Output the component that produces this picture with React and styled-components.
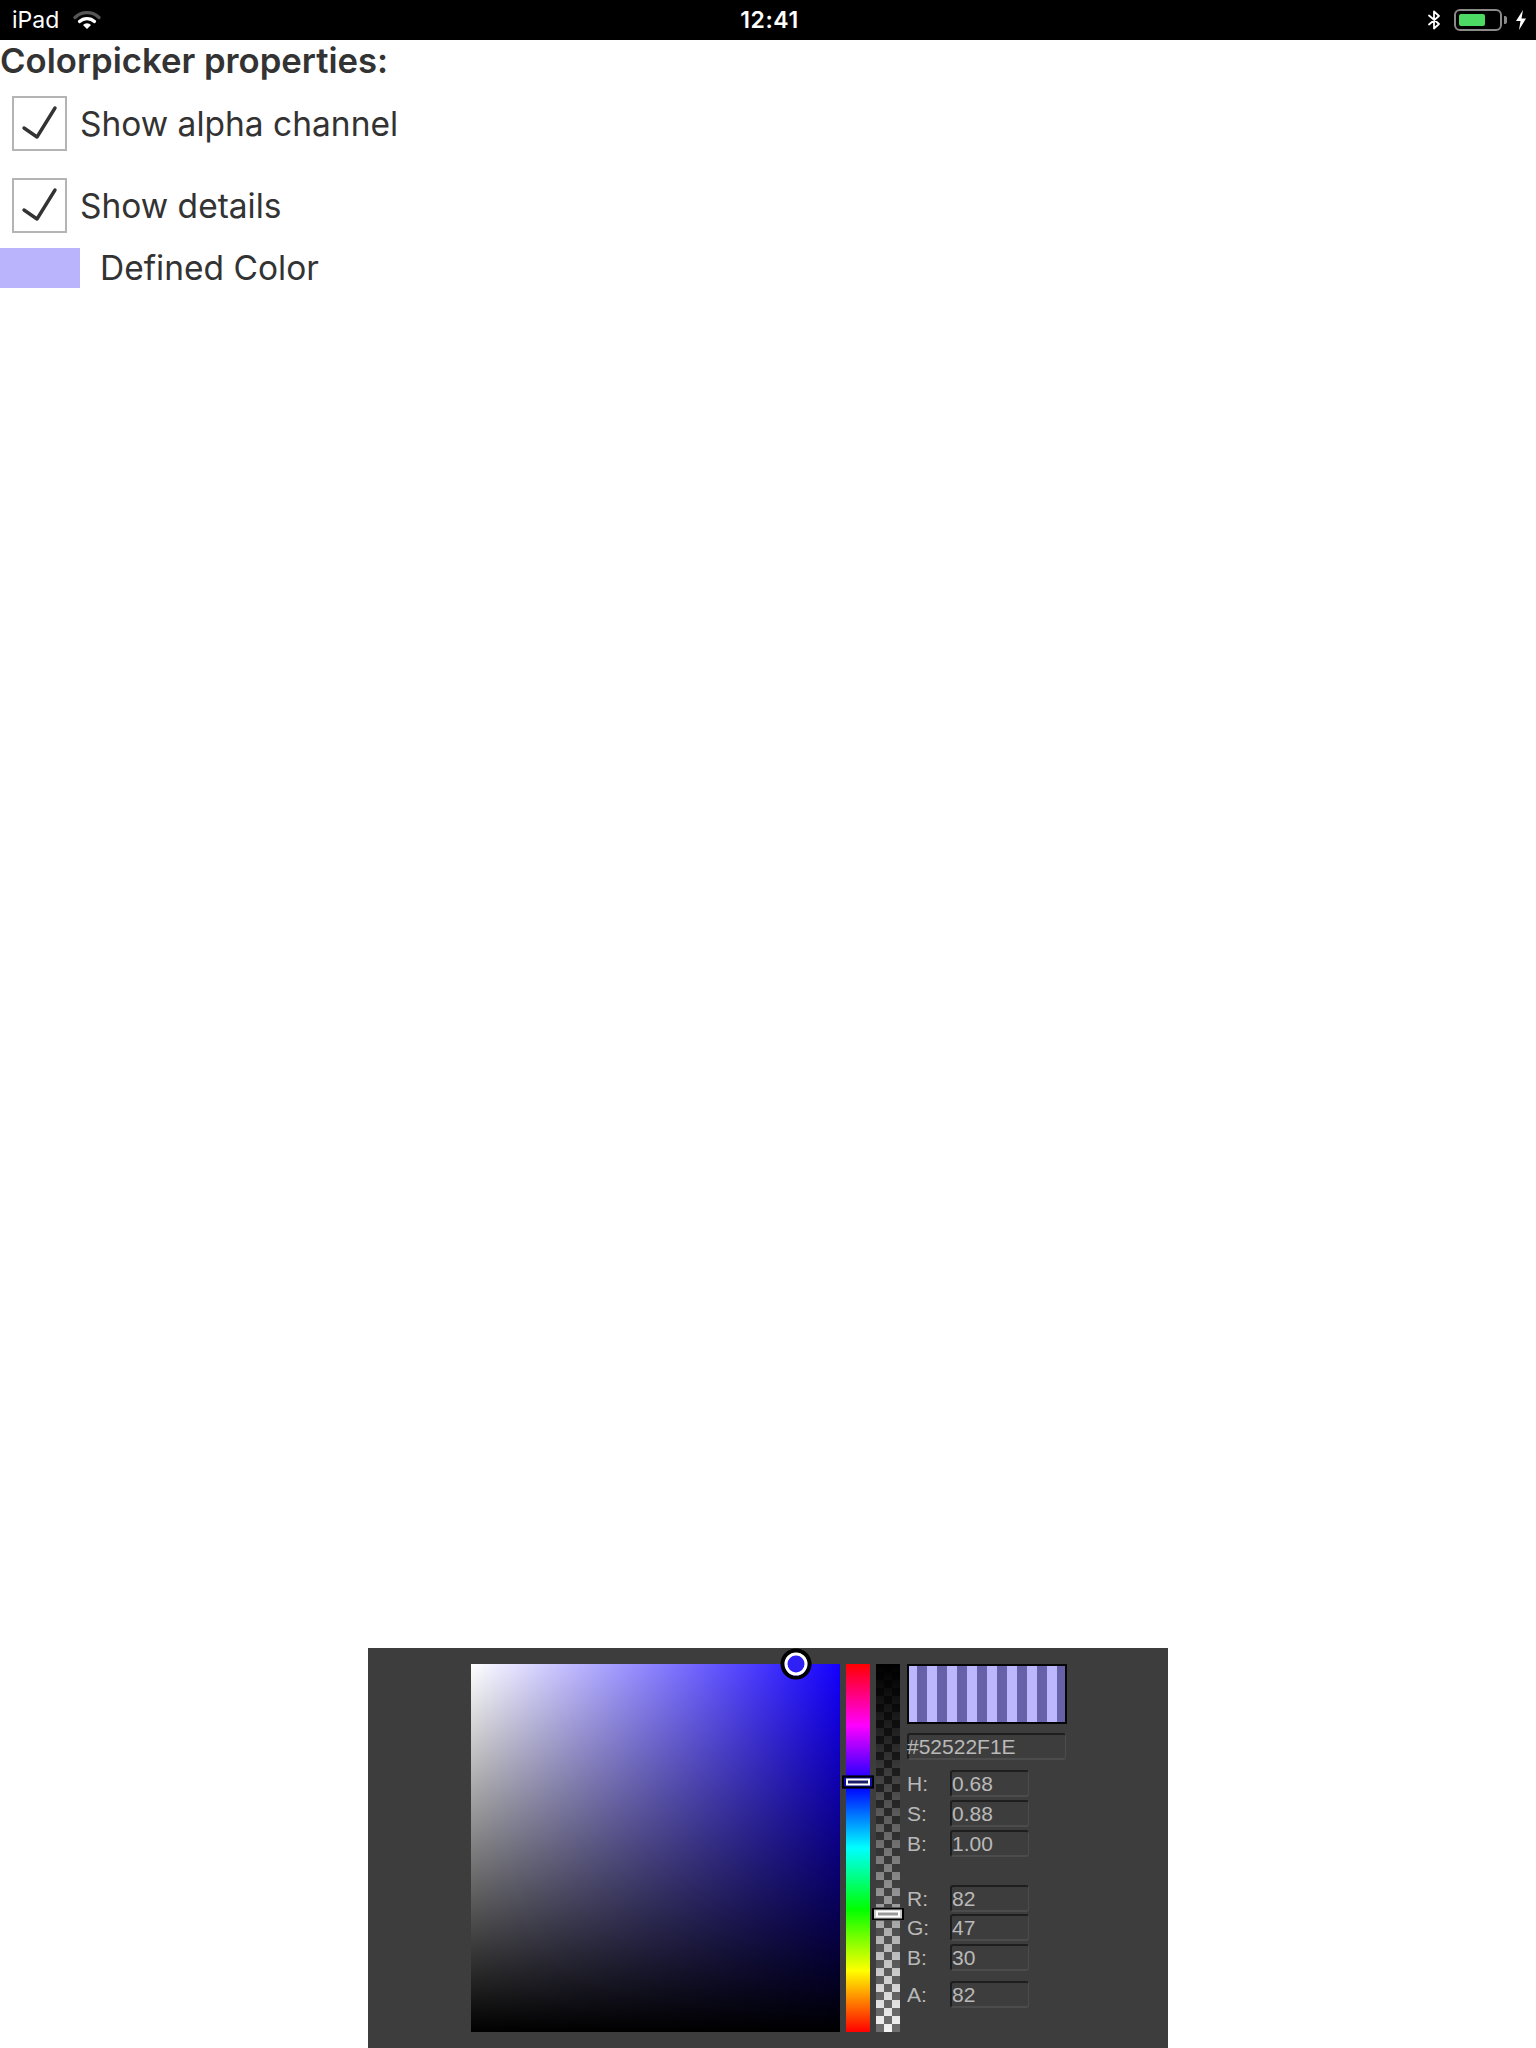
import React from 'react';
import styled, { createGlobalStyle } from 'styled-components';

const GlobalStyle = createGlobalStyle`
  html, body {
    margin: 0;
    padding: 0;
    background: #fff;
  }
  body {
    font-family: Inter, "Liberation Sans", sans-serif;
    overflow: hidden;
  }
`;

const Page = styled.div`
  height: 100vh;
  display: flex;
  flex-direction: column;
`;

const StatusBar = styled.div`
  height: 40px;
  flex: none;
  background: #000;
  color: #fff;
  display: grid;
  grid-template-columns: 1fr auto 1fr;
  align-items: center;
  padding: 0 9px 0 12px;
  font-size: 23px;
`;

const StatusLeft = styled.div`
  display: flex;
  align-items: center;
  gap: 14px;
`;

const Clock = styled.div`
  font-weight: 600;
  letter-spacing: 0.6px;
`;

const StatusRight = styled.div`
  display: flex;
  justify-content: flex-end;
  align-items: center;
  gap: 12px;
`;

const Battery = styled.div`
  display: flex;
  align-items: center;
  gap: 2px;
`;

const BatteryBody = styled.div`
  width: 48px;
  height: 22px;
  box-sizing: border-box;
  border: 2px solid #8a8a8a;
  border-radius: 6px;
  padding: 3px;
  display: flex;
`;

const BatteryLevel = styled.div`
  width: 26px;
  background: #4cd964;
  border-radius: 2px;
`;

const BatteryNub = styled.div`
  width: 3px;
  height: 8px;
  background: #8a8a8a;
  border-radius: 0 2px 2px 0;
  margin-right: 6px;
`;

const Properties = styled.section`
  display: flex;
  flex-direction: column;
  color: #333;
`;

const Heading = styled.h1`
  margin: 0;
  height: 40px;
  line-height: 40px;
  font-size: 34.7px;
  font-weight: 600;
`;

const CheckRow = styled.label`
  display: flex;
  align-items: center;
  gap: 13px;
  height: 55px;
  margin: ${(p) => p.$top}px 0 0 12px;
  font-size: 33.5px;
`;

const CheckBox = styled.span`
  width: 55px;
  height: 55px;
  box-sizing: border-box;
  border: 2px solid #b4b4b4;
  display: flex;
`;

const ColorRow = styled.div`
  display: flex;
  align-items: center;
  gap: 20px;
  height: 40px;
  margin-top: 15px;
  font-size: 33.5px;
`;

const Swatch = styled.span`
  width: 80px;
  height: 40px;
  background: ${(p) => p.$color};
`;

const Panel = styled.div`
  margin: auto auto 0;
  width: 800px;
  height: 400px;
  flex: none;
  box-sizing: border-box;
  background: #3d3d3d;
  padding: 16px 0 0 2px;
  display: flex;
  justify-content: center;
  align-items: flex-start;
  gap: 6px;
`;

const SVSquare = styled.div`
  position: relative;
  width: 369px;
  height: 368px;
  background:
    linear-gradient(to top, #000, rgba(0, 0, 0, 0)),
    linear-gradient(to right, #fff, ${(p) => p.$hue});
`;

const SVKnob = styled.div`
  position: absolute;
  width: 31px;
  height: 31px;
  box-sizing: border-box;
  border-radius: 50%;
  border: 4px solid #000;
  transform: translate(-50%, -50%);
  display: flex;
  &::after {
    content: '';
    flex: 1;
    border-radius: 50%;
    border: 3px solid #fff;
    background: ${(p) => p.$color};
  }
`;

const Bar = styled.div`
  position: relative;
  width: 24px;
  height: 368px;
`;

const HueBar = styled(Bar)`
  background: linear-gradient(
    to bottom,
    #f00 0%,
    #f0f 16.67%,
    #00f 33.33%,
    #0ff 50%,
    #0f0 66.67%,
    #ff0 83.33%,
    #f00 100%
  );
`;

const AlphaBar = styled(Bar)`
  background:
    linear-gradient(to bottom, #000 0%, rgba(0, 0, 0, 0.85) 20%, rgba(0, 0, 0, 0) 100%),
    conic-gradient(#6e6e6e 25%, #f4f4f4 0 50%, #6e6e6e 0 75%, #f4f4f4 0) 0 0 / 16px 16px;
`;

const BarHandle = styled.div`
  position: absolute;
  left: -4px;
  width: 32px;
  height: 13px;
  box-sizing: border-box;
  border: 2px solid #000;
  background: ${(p) => p.$fill};
  transform: translateY(-50%);
  padding: 1px 2px;
  display: flex;
  &::after {
    content: '';
    flex: 1;
    border: 2px solid #fff;
    background: ${(p) => p.$inner};
  }
`;

const Details = styled.div`
  margin-left: 1px;
  width: 160px;
  display: flex;
  flex-direction: column;
  color: #b9b9b9;
  font-family: "Liberation Sans", Arial, sans-serif;
  font-size: 21px;
`;

const Preview = styled.div`
  height: 60px;
  box-sizing: border-box;
  border: 2px solid #050505;
  background: linear-gradient(to right, #bdb7fd 50%, #6761aa 50%);
  background-size: 20px 100%;
  background-position: -2px 0;
`;

const Field = styled.div`
  width: ${(p) => p.$width}px;
  height: 27px;
  box-sizing: border-box;
  border-top: 2px solid #1e1e1e;
  border-left: 2px solid #1e1e1e;
  border-right: 1px solid #4c4c4c;
  border-bottom: 2px solid #4c4c4c;
  border-radius: 3px;
  line-height: 24px;
  white-space: nowrap;
  overflow: visible;
`;

const HexField = styled(Field)`
  margin-top: 9px;
  text-indent: -2px;
`;

const ValueRow = styled.div`
  display: flex;
  align-items: center;
  margin-top: ${(p) => p.$top}px;
`;

const Label = styled.span`
  width: 43px;
  flex: none;
`;

const Wifi = () => (
  <svg width="28" height="20" viewBox="0 0 28 20">
    <path d="M2 7.5 A17 17 0 0 1 26 7.5" fill="none" stroke="#555" strokeWidth="3.2" strokeLinecap="round" />
    <path d="M6.5 11.5 A11 11 0 0 1 21.5 11.5" fill="none" stroke="#fff" strokeWidth="3.2" strokeLinecap="round" />
    <path d="M14 19 L10 15 A5.6 5.6 0 0 1 18 15 Z" fill="#fff" />
  </svg>
);

const Bluetooth = () => (
  <svg width="15" height="20" viewBox="0 0 15 20">
    <path d="M2 5.5 L12 14 L7 18.5 L7 1.5 L12 6 L2 14.5" fill="none" stroke="#fff" strokeWidth="1.8" strokeLinejoin="round" strokeLinecap="round" />
  </svg>
);

const Bolt = () => (
  <svg width="12" height="20" viewBox="0 0 12 20">
    <path d="M8 0 L1 11 L5.5 11 L4 20 L11 8.5 L6.5 8.5 Z" fill="#fff" />
  </svg>
);

const Check = () => (
  <svg width="51" height="51" viewBox="0 0 51 51">
    <path d="M10 30 L23 39 L41 10" fill="none" stroke="#333" strokeWidth="3.4" strokeLinecap="round" strokeLinejoin="round" />
  </svg>
);

const hsv = [
  ['H:', '0.68', 10],
  ['S:', '0.88', 3],
  ['B:', '1.00', 3],
];

const rgb = [
  ['R:', '82', 28],
  ['G:', '47', 2],
  ['B:', '30', 3],
  ['A:', '82', 10],
];

export default function App() {
  const hue = 'rgb(20, 0, 255)';
  return (
    <Page>
      <GlobalStyle />
      <StatusBar>
        <StatusLeft>
          <span>iPad</span>
          <Wifi />
        </StatusLeft>
        <Clock>12:41</Clock>
        <StatusRight>
          <Bluetooth />
          <Battery>
            <BatteryBody>
              <BatteryLevel />
            </BatteryBody>
            <BatteryNub />
            <Bolt />
          </Battery>
        </StatusRight>
      </StatusBar>

      <Properties>
        <Heading>Colorpicker properties:</Heading>
        <CheckRow $top={16}>
          <CheckBox>
            <Check />
          </CheckBox>
          Show alpha channel
        </CheckRow>
        <CheckRow $top={27}>
          <CheckBox>
            <Check />
          </CheckBox>
          Show details
        </CheckRow>
        <ColorRow>
          <Swatch $color="#bab4fc" />
          Defined Color
        </ColorRow>
      </Properties>

      <Panel>
        <SVSquare $hue={hue}>
          <SVKnob $color="#2f21f6" style={{ left: '88%', top: '0%' }} />
        </SVSquare>
        <HueBar>
          <BarHandle $fill="#0b0bb0" $inner="#1a1a6a" style={{ top: '32%' }} />
        </HueBar>
        <AlphaBar>
          <BarHandle $fill="#c9c9c9" $inner="#9a9a9a" style={{ top: '68%' }} />
        </AlphaBar>
        <Details>
          <Preview />
          <HexField $width={159}>#52522F1E</HexField>
          {hsv.map(([label, value, top]) => (
            <ValueRow key={label + value} $top={top}>
              <Label>{label}</Label>
              <Field $width={79}>{value}</Field>
            </ValueRow>
          ))}
          {rgb.map(([label, value, top]) => (
            <ValueRow key={label + value} $top={top}>
              <Label>{label}</Label>
              <Field $width={79}>{value}</Field>
            </ValueRow>
          ))}
        </Details>
      </Panel>
    </Page>
  );
}
